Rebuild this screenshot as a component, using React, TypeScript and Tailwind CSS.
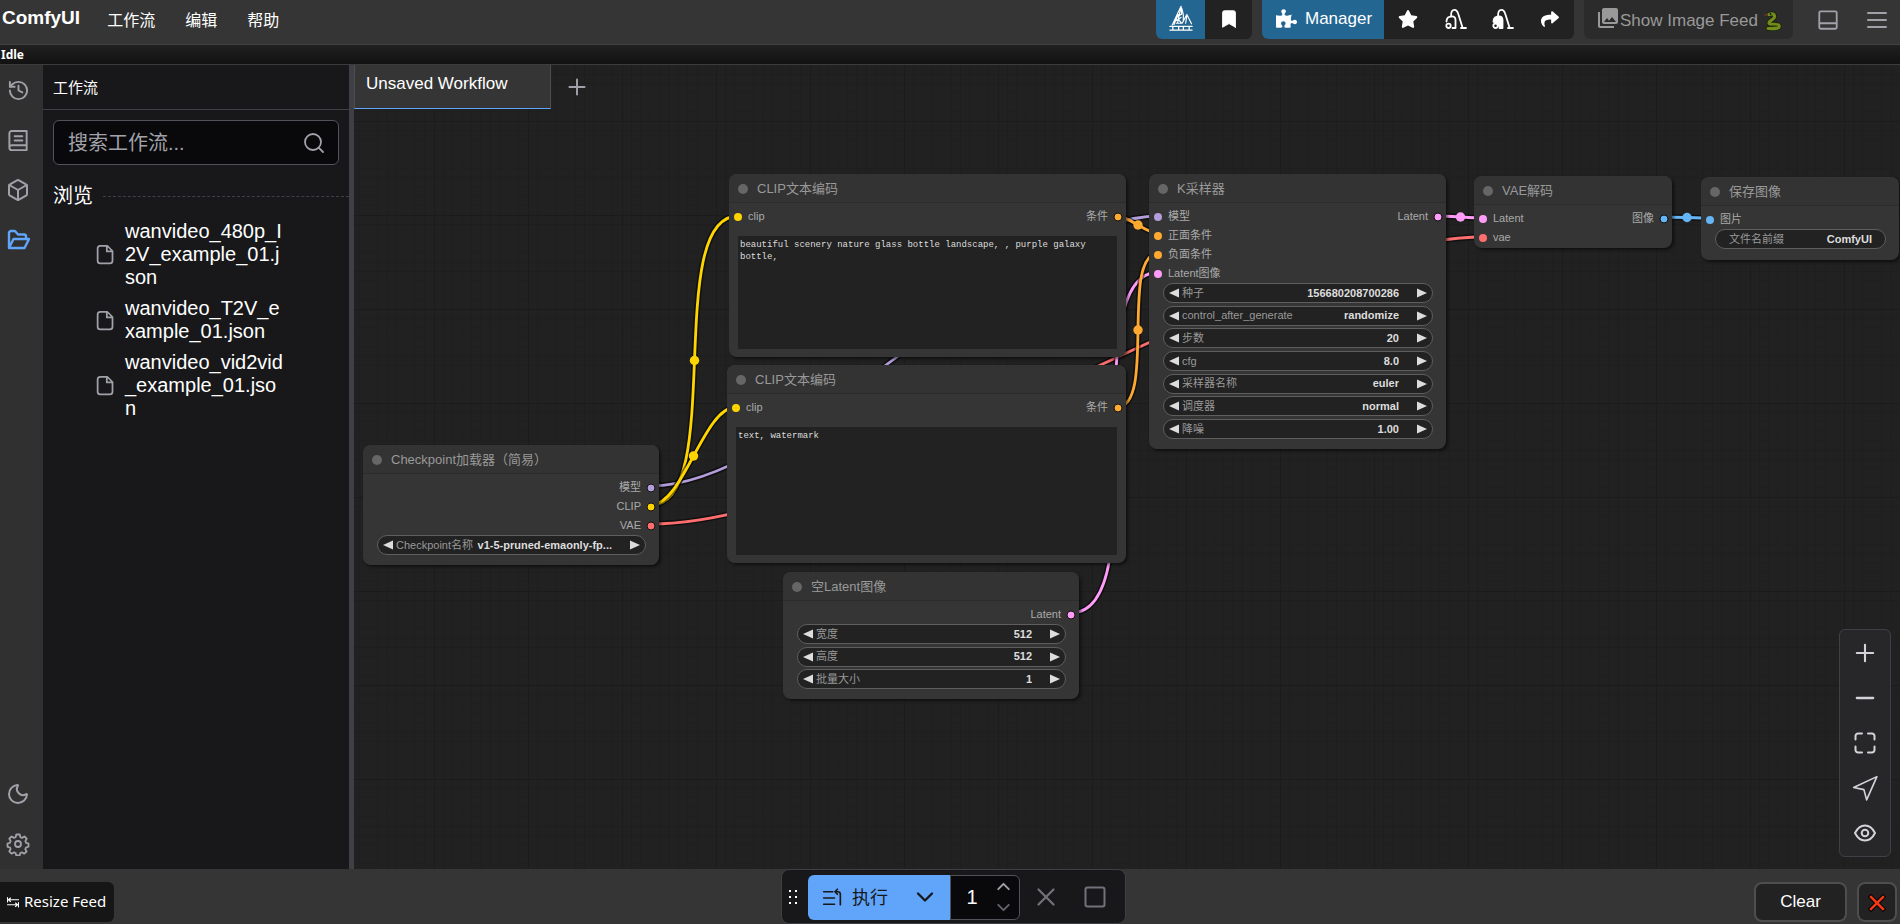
import type { ReactNode } from 'react'
import {
  Bookmark,
  Box,
  ChevronDown,
  ChevronUp,
  History,
  Minus,
  Moon,
  Plus,
  Search,
  X,
} from 'lucide-react'
import { FaPuzzlePiece, FaShare, FaStar } from 'react-icons/fa'
import { MdPhotoLibrary } from 'react-icons/md'
import { clsx } from 'clsx'

const SLOT_COLORS = {
  clip: '#ffd500',
  model: '#b39ddb',
  vae: '#ff6e6e',
  cond: '#ffa931',
  latent: '#ff9cf9',
  image: '#64b5f6',
}

type SlotType = keyof typeof SLOT_COLORS

interface Slot {
  label: string
  type: SlotType
}

interface Widget {
  label: string
  value: string
  arrows?: boolean
}

interface GraphNode {
  id: string
  title: string
  place: string
  inputs?: Slot[]
  outputs?: Slot[]
  widgets?: Widget[]
  text?: string
}

const nodes: GraphNode[] = [
  {
    id: 'checkpoint',
    title: 'Checkpoint加载器（简易）',
    place: 'left-[9px] top-[380px] w-[296px] h-[120px]',
    outputs: [
      { label: '模型', type: 'model' },
      { label: 'CLIP', type: 'clip' },
      { label: 'VAE', type: 'vae' },
    ],
    widgets: [{ label: 'Checkpoint名称', value: 'v1-5-pruned-emaonly-fp...', arrows: true }],
  },
  {
    id: 'positive',
    title: 'CLIP文本编码',
    place: 'left-[375px] top-[109px] w-[397px] h-[183px]',
    inputs: [{ label: 'clip', type: 'clip' }],
    outputs: [{ label: '条件', type: 'cond' }],
    text: 'beautiful scenery nature glass bottle landscape, , purple galaxy bottle,',
  },
  {
    id: 'negative',
    title: 'CLIP文本编码',
    place: 'left-[373px] top-[300px] w-[399px] h-[198px]',
    inputs: [{ label: 'clip', type: 'clip' }],
    outputs: [{ label: '条件', type: 'cond' }],
    text: 'text, watermark',
  },
  {
    id: 'sampler',
    title: 'K采样器',
    place: 'left-[795px] top-[109px] w-[297px] h-[275px]',
    inputs: [
      { label: '模型', type: 'model' },
      { label: '正面条件', type: 'cond' },
      { label: '负面条件', type: 'cond' },
      { label: 'Latent图像', type: 'latent' },
    ],
    outputs: [{ label: 'Latent', type: 'latent' }],
    widgets: [
      { label: '种子', value: '156680208700286', arrows: true },
      { label: 'control_after_generate', value: 'randomize', arrows: true },
      { label: '步数', value: '20', arrows: true },
      { label: 'cfg', value: '8.0', arrows: true },
      { label: '采样器名称', value: 'euler', arrows: true },
      { label: '调度器', value: 'normal', arrows: true },
      { label: '降噪', value: '1.00', arrows: true },
    ],
  },
  {
    id: 'decode',
    title: 'VAE解码',
    place: 'left-[1120px] top-[111px] w-[198px] h-[72px]',
    inputs: [
      { label: 'Latent', type: 'latent' },
      { label: 'vae', type: 'vae' },
    ],
    outputs: [{ label: '图像', type: 'image' }],
  },
  {
    id: 'save',
    title: '保存图像',
    place: 'left-[1347px] top-[112px] w-[198px] h-[83px]',
    inputs: [{ label: '图片', type: 'image' }],
    widgets: [{ label: '文件名前缀', value: 'ComfyUI' }],
  },
  {
    id: 'empty-latent',
    title: '空Latent图像',
    place: 'left-[429px] top-[507px] w-[296px] h-[127px]',
    outputs: [{ label: 'Latent', type: 'latent' }],
    widgets: [
      { label: '宽度', value: '512', arrows: true },
      { label: '高度', value: '512', arrows: true },
      { label: '批量大小', value: '1', arrows: true },
    ],
  },
]

// x1, y1 -> x2, y2 in canvas space
const links: { type: SlotType; from: [number, number]; to: [number, number] }[] = [
  { type: 'model', from: [297, 421], to: [805, 151] },
  { type: 'vae', from: [297, 459], to: [1130, 172] },
  { type: 'clip', from: [297, 440], to: [384, 151] },
  { type: 'clip', from: [297, 440], to: [382, 342] },
  { type: 'latent', from: [717, 548], to: [805, 207] },
  { type: 'cond', from: [763, 151], to: [805, 169] },
  { type: 'cond', from: [763, 342], to: [805, 188] },
  { type: 'latent', from: [1083, 151], to: [1130, 153] },
  { type: 'image', from: [1309, 152], to: [1357, 153] },
]

const workflows = [
  'wanvideo_480p_I2V_example_01.json',
  'wanvideo_T2V_example_01.json',
  'wanvideo_vid2vid_example_01.json',
]

function Glyph({ children, className, width = 2 }: { children: ReactNode; className?: string; width?: number }) {
  return (
    <svg
      viewBox="0 0 24 24"
      fill="none"
      stroke="currentColor"
      strokeWidth={width}
      strokeLinecap="round"
      strokeLinejoin="round"
      aria-hidden="true"
      className={className}
    >
      {children}
    </svg>
  )
}

function LogoIcon() {
  return (
    <Glyph className="size-7" width={1}>
      <path d="M12 2 4.5 18M12 2l.5 7M12.6 3.5 14 9M12 2 9 16.5M7.500 12l5-3.500M6 15.500l6-4M8 16.500h5M13 16.500l4-7.500 4 8M9.500 13l3 3.500M14 9.500v5M6 17.500 9.500 9M17 9.500l-1 7" />
      <path d="M2.5 19.2h19M2.5 22.3h19M5 19.2v3M10 19.2v3M14 19.2v3M19 19.2v3" strokeWidth="1.1" />
    </Glyph>
  )
}

function VacuumIcon({ filled }: { filled?: boolean }) {
  return (
    <Glyph className="size-6" width={1.8}>
      <path d="M7 9.5C7 5 8 2.8 10.5 2.8S13.600 4.500 14.300 7L18.500 20.500M17 21h5" />
      <path
        d="M2.500 14.500C2.500 11 5 9.300 8 9.300S11.500 11 11.500 13V21H8.500"
        fill={filled ? 'currentColor' : 'none'}
      />
      {filled && <path d="M3 15C5 13 9 14 9 18V20" />}
      <circle cx="4.500" cy="18.800" r="2.200" className={filled ? 'fill-[#222]' : ''} />
    </Glyph>
  )
}

function SnakeIcon() {
  return (
    <svg viewBox="0 0 18 20" aria-hidden="true" className="h-5 w-[18px]">
      <g fill="none" strokeLinecap="round" strokeLinejoin="round">
        <path d="M5 3.500C8 2 11 3 10.500 6S5 9.500 5 12s9 0 10 2.500-2 3.500-11 3" stroke="#1c2408" strokeWidth="5" />
        <path d="M5 3.500C8 2 11 3 10.500 6S5 9.500 5 12s9 0 10 2.500-2 3.500-11 3" stroke="#728c1e" strokeWidth="3.200" />
        <path d="M7 14.800h6" stroke="#3f5210" strokeWidth="1" />
        <path d="M1 4h1.500" stroke="#a33" strokeWidth="1" />
      </g>
      <circle cx="6.500" cy="3" r="1" fill="#1c1c1c" />
    </svg>
  )
}

function FileIcon() {
  return (
    <Glyph className="size-[21px] shrink-0 text-[#a1a1aa]" width={2}>
      <path d="M14 2H6a3 3 0 0 0-3 3v14a3 3 0 0 0 3 3h11a3 3 0 0 0 3-3V8zM13.500 2.500V8.500H19.500" />
    </Glyph>
  )
}

function TopBar() {
  return (
    <header className="flex h-[45px] shrink-0 items-start border-b border-[#414141] bg-[#353535] pr-[11px]">
      <h1 className="pt-[6px] pl-[2px] text-[19px] leading-6 font-bold">ComfyUI</h1>
      <nav className="ml-[27px] flex gap-[30px] pt-[9px] text-base">
        <button type="button">工作流</button>
        <button type="button">编辑</button>
        <button type="button">帮助</button>
      </nav>
      <div className="ml-auto flex h-[39px] items-stretch">
        <div className="flex overflow-hidden rounded-b-md bg-[#222]">
          <button type="button" aria-label="Crystools" className="flex w-[49px] items-center justify-center bg-[#236692] pb-1">
            <LogoIcon />
          </button>
          <button type="button" aria-label="Bookmark" className="flex w-[47px] items-center justify-center pb-[2px]">
            <Bookmark className="size-[22px]" fill="currentColor" strokeWidth={1} />
          </button>
        </div>
        <div className="ml-[10px] flex overflow-hidden rounded-b-md bg-[#222]">
          <button type="button" className="flex w-[122px] items-center gap-2 bg-[#236692] pb-[2px] pl-[14px] text-[17px]">
            <FaPuzzlePiece className="size-[21px]" />
            Manager
          </button>
          <button type="button" aria-label="Favorite" className="flex w-[48px] items-center justify-center pb-[2px]">
            <FaStar className="size-5" />
          </button>
          <button type="button" aria-label="Unload models" className="flex w-[47px] items-center justify-center pb-[2px]">
            <VacuumIcon />
          </button>
          <button type="button" aria-label="Free cache" className="flex w-[47px] items-center justify-center pb-[2px]">
            <VacuumIcon filled />
          </button>
          <button type="button" aria-label="Share" className="flex w-[48px] items-center justify-center pb-[2px]">
            <FaShare className="size-[18px]" />
          </button>
        </div>
        <button
          type="button"
          className="ml-[10px] flex w-[209px] items-center rounded-b-md bg-[#2b2b2b] pt-[2px] pl-3 text-[17px] text-[#999]"
        >
          <MdPhotoLibrary className="mb-[6px] size-6 shrink-0" />
          Show Image Feed
          <span className="ml-[6px]">
            <SnakeIcon />
          </span>
        </button>
        <button type="button" aria-label="Toggle bottom panel" className="ml-6 flex items-center text-[#a1a1aa]">
          <Glyph className="size-[22px]">
            <rect x="2.500" y="2.500" width="19" height="19" rx="1.500" />
            <path d="M3 15.500h18" />
          </Glyph>
        </button>
        <button type="button" aria-label="Menu" className="ml-[26px] flex items-center text-[#a1a1aa]">
          <Glyph className="size-[24px]">
            <path d="M3 5h18M3 12h18M3 19h18" />
          </Glyph>
        </button>
      </div>
    </header>
  )
}

function RailButton({ label, active, children }: { label: string; active?: boolean; children: ReactNode }) {
  return (
    <button
      type="button"
      aria-label={label}
      className={clsx(
        'flex h-[50px] w-9 items-center justify-center',
        active ? 'text-[#60a5fa]' : 'text-[#a1a1aa]'
      )}
    >
      {children}
    </button>
  )
}

function SideRail() {
  return (
    <nav className="flex w-[43px] shrink-0 flex-col justify-between bg-[#303030]">
      <div>
        <RailButton label="队列">
          <History className="size-[23px]" />
        </RailButton>
        <RailButton label="节点库">
          <Glyph className="size-[23px]">
            <path d="M5 2h15.500v20H5a2.500 2.500 0 0 1-2.500-2.500v-15A2.500 2.500 0 0 1 5 2zM20.500 17H5a2.500 2.500 0 0 0-2.500 2.500M8 7.500h8M8 12h8" />
          </Glyph>
        </RailButton>
        <RailButton label="模型库">
          <Box className="size-6" />
        </RailButton>
        <RailButton label="工作流" active>
          <Glyph className="size-6" width={2.400}>
            <path d="M3 20V5a2 2 0 0 1 2-2h4l3 3.500h6a2 2 0 0 1 2 2V11M3 20h15.500L23 11H7.500L3 20" />
          </Glyph>
        </RailButton>
      </div>
      <div>
        <RailButton label="切换主题">
          <Moon className="size-6" />
        </RailButton>
        <RailButton label="设置">
          <Glyph className="size-[24px]" width={1.800}>
            <path d="M10.300 2.500h3.400l.7 2.700 1.600.7 2.500-1.400 2.200 2.200-1.300 2.500.7 1.600 2.400.7v3.200l-2.500.8-.7 1.600 1.300 2.400-2.300 2.200-2.400-1.300-1.600.6-.7 2.500h-3.300l-.7-2.500-1.600-.6-2.500 1.300-2.200-2.300 1.300-2.400-.6-1.500-2.500-.7v-3.300l2.500-.7.6-1.600-1.300-2.500 2.300-2.200 2.400 1.400 1.600-.7z" />
            <circle cx="12" cy="12" r="3" />
          </Glyph>
        </RailButton>
      </div>
    </nav>
  )
}

function WorkflowPanel() {
  return (
    <aside className="w-[311px] shrink-0 border-r-[5px] border-[#3f3f46] bg-[#18181a]">
      <h2 className="flex h-[45px] items-center border-b border-[#3f3f46] px-[10px] pt-[2px] text-[15px]">工作流</h2>
      <div className="px-[10px] pt-[10px]">
        <label className="flex h-[45px] items-center rounded-md border border-[#52525b] bg-[#09090b] pr-3 pl-[14px]">
          <input
            type="text"
            aria-label="搜索工作流"
            placeholder="搜索工作流..."
            className="min-w-0 flex-1 bg-transparent text-xl outline-none placeholder:text-[#a1a1aa]"
          />
          <Search className="size-6 text-[#a1a1aa]" strokeWidth={1.800} />
        </label>
      </div>
      <div className="mt-4 flex items-center gap-[10px] pl-[10px]">
        <h3 className="text-xl leading-[30px]">浏览</h3>
        <span className="flex-1 border-t border-dashed border-[#3f3f46]" />
      </div>
      <ul className="mt-[5px]">
        {workflows.map((name) => (
          <li key={name}>
            <button type="button" className="flex items-center gap-[9px] py-1 pl-[52px] text-left">
              <FileIcon />
              <span className="w-[160px] text-xl leading-[23px] break-all">{name}</span>
            </button>
          </li>
        ))}
      </ul>
    </aside>
  )
}

function SlotDot({ type, ring }: { type: SlotType; ring?: boolean }) {
  return (
    <svg viewBox="0 0 10 10" aria-hidden="true" className="size-[10px] shrink-0">
      <circle cx="5" cy="5" r="4" fill={SLOT_COLORS[type]} stroke={ring ? '#111' : 'none'} strokeWidth="1" />
    </svg>
  )
}

function Arrow({ label, right }: { label: string; right?: boolean }) {
  return (
    <button type="button" aria-label={label} className="shrink-0">
      <svg viewBox="0 0 10 10" className="size-[10px] fill-[#ddd]">
        <path d={right ? 'M0 .5 10 5 0 9.500z' : 'M10 .5 0 5 10 9.500z'} />
      </svg>
    </button>
  )
}

function WidgetRow({ id, label, value, arrows }: Widget & { id: string }) {
  return (
    <div
      className={clsx(
        'flex h-5 items-center rounded-full border border-[#5e5e5e] bg-[#222]',
        arrows ? 'px-[5px]' : 'px-[13px]'
      )}
    >
      {arrows && <Arrow label={`${label} -`} />}
      <label htmlFor={id} className={clsx('shrink-0 text-[11px] text-[#999]', arrows && 'ml-[3px]')}>
        {label}
      </label>
      <input
        id={id}
        type="text"
        defaultValue={value}
        className={clsx(
          'min-w-0 flex-1 bg-transparent text-right text-[11px] font-bold text-[#ddd] outline-none',
          arrows && 'mr-[18px]'
        )}
      />
      {arrows && <Arrow label={`${label} +`} right />}
    </div>
  )
}

function NodeCard({ id, title, place, inputs = [], outputs = [], widgets = [], text }: GraphNode) {
  return (
    <article
      className={clsx(
        'absolute flex flex-col rounded-lg bg-[#353535] shadow-[2px_2px_3px_rgba(0,0,0,0.5)]',
        place
      )}
    >
      <h3 className="flex h-[29px] shrink-0 items-center gap-[9px] rounded-t-lg border-b border-[#2c2c2c] bg-[#333] pt-px pl-[9px] text-[13px] text-[#999]">
        <span className="size-[10px] rounded-full bg-[#666]" />
        {title}
      </h3>
      <div className="flex justify-between pt-1 pr-[3px] pl-1 text-[11px] text-[#aaa]">
        <ul>
          {inputs.map((slot) => (
            <li key={slot.label} className="flex h-[19px] items-center gap-[5px]">
              <SlotDot type={slot.type} />
              {slot.label}
            </li>
          ))}
        </ul>
        <ul>
          {outputs.map((slot) => (
            <li key={slot.label} className="flex h-[19px] items-center justify-end gap-[5px]">
              {slot.label}
              <SlotDot type={slot.type} ring />
            </li>
          ))}
        </ul>
      </div>
      {widgets.length > 0 && (
        <div className="mr-[13px] mb-[10px] ml-[14px] flex flex-1 flex-col justify-between">
          {widgets.map((widget) => (
            <WidgetRow key={widget.label} id={`${id}-${widget.label}`} {...widget} />
          ))}
        </div>
      )}
      {text !== undefined && (
        <textarea
          aria-label={title}
          defaultValue={text}
          spellCheck={false}
          className="mx-[9px] mt-[10px] mb-2 flex-1 resize-none bg-[#222] p-[2px] pt-[3px] font-['Liberation_Mono',monospace] text-[9px] leading-3 text-[#ddd] outline-none"
        />
      )}
    </article>
  )
}

function LinkLayer() {
  return (
    <svg aria-hidden="true" className="absolute inset-0 size-full">
      <defs>
        <pattern id="grid" x="80" y="56" width="94" height="94" patternUnits="userSpaceOnUse" viewBox="0 0 100 100">
          <rect width="100" height="100" fill="#212121" />
          <path
            d="M10 0V100M20 0V100M30 0V100M40 0V100M50 0V100M60 0V100M70 0V100M80 0V100M90 0V100M0 10H100M0 20H100M0 30H100M0 40H100M0 50H100M0 60H100M0 70H100M0 80H100M0 90H100"
            stroke="#1e1e1e"
          />
          <path d="M0 0H100M0 0V100" stroke="#1b1b1b" strokeWidth="2" />
        </pattern>
      </defs>
      <rect width="100%" height="100%" fill="url(#grid)" />
      {links.map(({ type, from: [x1, y1], to: [x2, y2] }) => {
        const bend = Math.hypot(x2 - x1, y2 - y1) / 4
        const d = `M${x1} ${y1}C${x1 + bend} ${y1} ${x2 - bend} ${y2} ${x2} ${y2}`
        return (
          <g key={d} fill="none">
            <path d={d} stroke="#000" strokeOpacity="0.5" strokeWidth="6" />
            <path d={d} stroke={SLOT_COLORS[type]} strokeWidth="2.800" />
            <circle cx={(x1 + x2) / 2} cy={(y1 + y2) / 2} r="4.700" fill={SLOT_COLORS[type]} />
          </g>
        )
      })}
    </svg>
  )
}

function CanvasTools() {
  const button = 'flex w-full flex-1 items-center justify-center'
  return (
    <div className="absolute right-[9px] bottom-3 flex h-[228px] w-[52px] flex-col rounded-md border border-[#3f3f46] bg-[#27272a] text-[#d4d4d8]">
      <button type="button" aria-label="放大" className={button}>
        <Plus className="size-7" strokeWidth={1.800} />
      </button>
      <button type="button" aria-label="缩小" className={button}>
        <Minus className="size-7" strokeWidth={2} />
      </button>
      <button type="button" aria-label="适应视图" className={button}>
        <Glyph className="size-6">
          <path d="M9 2.500H5A2.500 2.500 0 0 0 2.500 5V8.500M15 2.500h4A2.500 2.500 0 0 1 21.500 5V8.500M9 21.500H5A2.500 2.500 0 0 1 2.500 19V15.500M15 21.500h4a2.500 2.500 0 0 0 2.500-2.500V15.500" />
        </Glyph>
      </button>
      <button type="button" aria-label="选择模式" className={button}>
        <Glyph className="size-[26px]" width={1.500}>
          <path d="M23 1.500 1.500 11.500 11 13.500 13.500 23z" />
        </Glyph>
      </button>
      <button type="button" aria-label="切换连线可见性" className={button}>
        <Glyph className="size-6">
          <path d="M2 12C4.500 7 8 4.500 12 4.500S19.500 7 22 12c-2.500 5-6 7.500-10 7.500S4.500 17 2 12z" />
          <circle cx="12" cy="12" r="3.300" />
        </Glyph>
      </button>
    </div>
  )
}

function GraphCanvas() {
  return (
    <main className="relative min-w-0 flex-1 overflow-hidden bg-[#212121]">
      <LinkLayer />
      {nodes.map((node) => (
        <NodeCard key={node.id} {...node} />
      ))}
      <div className="relative flex h-[44px] w-fit items-center">
        <button
          type="button"
          className="h-full w-[197px] border-r border-b border-l border-[#4e4e4e] border-b-[#60a5fa] bg-[#353535] pb-[5px] pl-[11px] text-left text-[17px]"
        >
          Unsaved Workflow
        </button>
        <button type="button" aria-label="新建工作流" className="ml-[13px] text-[#a1a1aa]">
          <Plus className="size-[26px]" strokeWidth={1.800} />
        </button>
      </div>
      <CanvasTools />
    </main>
  )
}

function QueueBar() {
  return (
    <div className="ml-[7px] flex h-[55px] w-[345px] items-center rounded-lg border border-[#3f3f46] bg-[#18181b] pt-px">
      <span className="ml-[7px] grid grid-cols-2 gap-x-[4px] gap-y-[4px]">
        {Array.from({ length: 6 }, (_, i) => (
          <span key={i} className="size-[2px] bg-white" />
        ))}
      </span>
      <div className="ml-[11px] flex h-[45px]">
        <button type="button" className="flex w-[92px] items-center gap-[10px] rounded-l-md bg-[#60a5fa] pt-[2px] pl-[14px] text-lg text-[#18181b]">
          <Glyph className="size-5">
            <path d="M2 4.500h11M2 12h13M2 19.500h13M16 4.500h3a3 3 0 0 1 3 3V20M18.500 1.500l-3 3 3 3" />
          </Glyph>
          执行
        </button>
        <button type="button" aria-label="更多执行选项" className="flex w-[50px] items-center justify-center bg-[#60a5fa] text-[#18181b]">
          <ChevronDown className="size-7" />
        </button>
        <div className="flex w-[70px] rounded-r-md border border-[#52525b] bg-[#09090b]">
          <input type="text" aria-label="批次数量" defaultValue="1" className="w-[42px] bg-transparent text-center text-xl outline-none" />
          <div className="flex flex-col justify-center text-[#a1a1aa]">
            <button type="button" aria-label="增加">
              <ChevronUp className="size-[21px]" strokeWidth={2.200} />
            </button>
            <button type="button" aria-label="减少" className="text-[#63636a]">
              <ChevronDown className="size-[21px]" strokeWidth={2.200} />
            </button>
          </div>
        </div>
      </div>
      <button type="button" aria-label="取消" className="ml-[11px] text-[#71717a]">
        <X className="size-[30px]" strokeWidth={1.800} />
      </button>
      <button type="button" aria-label="清空队列" className="ml-[22px] text-[#71717a]">
        <Glyph className="size-6">
          <rect x="2.500" y="2.500" width="19" height="19" rx="2" />
        </Glyph>
      </button>
    </div>
  )
}

function BottomBar() {
  return (
    <footer className="grid h-[55px] shrink-0 grid-cols-[1fr_auto_1fr] items-center bg-[#353535]">
      <button
        type="button"
        className="mt-[10px] flex h-10 w-[114px] items-center gap-[5px] rounded-r-md bg-[#161616] pl-[7px] font-['Noto_Sans',sans-serif] text-[15px] whitespace-nowrap"
      >
        <Glyph className="size-3 shrink-0" width={2.200}>
          <path d="M1 3v9M3 7.500h20M7 4 3 7.500 7 11M23 13v9M1 17.500h20M17 14l4 3.500-4 3.500" />
        </Glyph>
        Resize Feed
      </button>
      <QueueBar />
      <div className="mt-[10px] flex justify-end gap-[10px] pr-[3px]">
        <button type="button" className="h-10 w-[93px] rounded-lg border-2 border-[#4e4e4e] bg-[#222] text-[17px]">
          Clear
        </button>
        <button
          type="button"
          aria-label="Close feed"
          className="flex size-10 items-center justify-center rounded-lg border-2 border-[#4e4e4e] bg-[#222]"
        >
          <svg viewBox="0 0 18 18" aria-hidden="true" className="mt-[2px] size-[18px]" strokeLinecap="square">
            <path d="M3 3 15 15M15 3 3 15" stroke="#000" strokeWidth="4.500" />
            <path d="M3 3 15 15M15 3 3 15" stroke="#f03a17" strokeWidth="2.500" />
          </svg>
        </button>
      </div>
    </footer>
  )
}

export default function App() {
  return (
    <div className="flex h-screen flex-col overflow-hidden bg-[#212121] font-['Liberation_Sans','Noto_Sans_CJK_SC',sans-serif] text-white">
      <TopBar />
      <p className="flex h-5 shrink-0 items-center border-b border-[#3c3c3c] bg-linear-to-b from-[#202020] to-[#121212] pl-px font-['Noto_Sans',sans-serif] text-xs font-bold">
        Idle
      </p>
      <div className="flex min-h-0 flex-1">
        <SideRail />
        <WorkflowPanel />
        <GraphCanvas />
      </div>
      <BottomBar />
    </div>
  )
}
